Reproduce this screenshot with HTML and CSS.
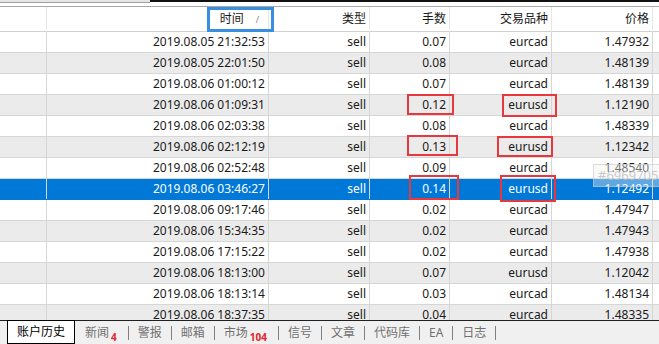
FILE: index.html
```html
<!DOCTYPE html>
<html lang="zh-CN">
<head>
    <meta charset="UTF-8">
    <title>账户历史</title>
    <link rel="stylesheet" href="styles.css">
</head>
<body>
    <div class="sheet">
        <div class="top-strip">
            <div class="strip-left"></div>
            <div class="strip-right"></div>
        </div>

        <div class="grid">
            <div class="row head">
                <div class="cell"></div>
                <div class="cell time-head">时间<span class="sort">/</span></div>
                <div class="cell">类型</div>
                <div class="cell">手数</div>
                <div class="cell">交易品种</div>
                <div class="cell">价格</div>
                <div class="cell last"></div>
            </div>

            <div class="row"><div class="cell"></div><div class="cell">2019.08.05 21:32:53</div><div class="cell">sell</div><div class="cell">0.07</div><div class="cell">eurcad</div><div class="cell">1.47932</div><div class="cell last"></div></div>
            <div class="row alt"><div class="cell"></div><div class="cell">2019.08.05 22:01:50</div><div class="cell">sell</div><div class="cell">0.08</div><div class="cell">eurcad</div><div class="cell">1.48139</div><div class="cell last"></div></div>
            <div class="row"><div class="cell"></div><div class="cell">2019.08.06 01:00:12</div><div class="cell">sell</div><div class="cell">0.07</div><div class="cell">eurcad</div><div class="cell">1.48139</div><div class="cell last"></div></div>
            <div class="row alt"><div class="cell"></div><div class="cell">2019.08.06 01:09:31</div><div class="cell">sell</div><div class="cell">0.12</div><div class="cell">eurusd</div><div class="cell">1.12190</div><div class="cell last"></div></div>
            <div class="row"><div class="cell"></div><div class="cell">2019.08.06 02:03:38</div><div class="cell">sell</div><div class="cell">0.08</div><div class="cell">eurcad</div><div class="cell">1.48339</div><div class="cell last"></div></div>
            <div class="row alt"><div class="cell"></div><div class="cell">2019.08.06 02:12:19</div><div class="cell">sell</div><div class="cell">0.13</div><div class="cell">eurusd</div><div class="cell">1.12342</div><div class="cell last"></div></div>
            <div class="row"><div class="cell"></div><div class="cell">2019.08.06 02:52:48</div><div class="cell">sell</div><div class="cell">0.09</div><div class="cell">eurcad</div><div class="cell">1.48540</div><div class="cell last"></div></div>
            <div class="row selected"><div class="cell"></div><div class="cell">2019.08.06 03:46:27</div><div class="cell">sell</div><div class="cell">0.14</div><div class="cell">eurusd</div><div class="cell">1.12492</div><div class="cell last"></div></div>
            <div class="row"><div class="cell"></div><div class="cell">2019.08.06 09:17:46</div><div class="cell">sell</div><div class="cell">0.02</div><div class="cell">eurcad</div><div class="cell">1.47947</div><div class="cell last"></div></div>
            <div class="row alt"><div class="cell"></div><div class="cell">2019.08.06 15:34:35</div><div class="cell">sell</div><div class="cell">0.02</div><div class="cell">eurcad</div><div class="cell">1.47943</div><div class="cell last"></div></div>
            <div class="row"><div class="cell"></div><div class="cell">2019.08.06 17:15:22</div><div class="cell">sell</div><div class="cell">0.02</div><div class="cell">eurcad</div><div class="cell">1.47938</div><div class="cell last"></div></div>
            <div class="row alt"><div class="cell"></div><div class="cell">2019.08.06 18:13:00</div><div class="cell">sell</div><div class="cell">0.07</div><div class="cell">eurusd</div><div class="cell">1.12042</div><div class="cell last"></div></div>
            <div class="row"><div class="cell"></div><div class="cell">2019.08.06 18:13:14</div><div class="cell">sell</div><div class="cell">0.03</div><div class="cell">eurcad</div><div class="cell">1.48134</div><div class="cell last"></div></div>
            <div class="row alt"><div class="cell"></div><div class="cell">2019.08.06 18:37:35</div><div class="cell">sell</div><div class="cell">0.04</div><div class="cell">eurcad</div><div class="cell">1.48335</div><div class="cell last"></div></div>
        </div>

        <div class="tabs">
            <span class="tab active">账户历史</span>
            <span class="tab first">新闻<b class="badge">4</b></span>
            <span class="sep"></span>
            <span class="tab">警报</span>
            <span class="sep"></span>
            <span class="tab">邮箱</span>
            <span class="sep"></span>
            <span class="tab">市场<b class="badge">104</b></span>
            <span class="sep"></span>
            <span class="tab">信号</span>
            <span class="sep"></span>
            <span class="tab">文章</span>
            <span class="sep"></span>
            <span class="tab">代码库</span>
            <span class="sep"></span>
            <span class="tab">EA</span>
            <span class="sep"></span>
            <span class="tab">日志</span>
            <span class="sep"></span>
        </div>

        <!-- annotation marks drawn over the table -->
        <div class="mark-blue"></div>
        <div class="mark m1"></div>
        <div class="mark m2"></div>
        <div class="mark m3"></div>
        <div class="mark m4"></div>
        <div class="mark m5"></div>
        <div class="mark m6"></div>
        <div class="picker-tip">#69697055</div>
    </div>
</body>
</html>
```

FILE: styles.css
```css
body {
    margin: 0;
    padding: 0;
    background-color: #ffffff;
    font-family: "Noto Sans", "Noto Sans CJK SC", sans-serif;
    font-size: 12px;
    color: #1a1a1a;
    overflow: hidden;
}

.sheet {
    position: relative;
    width: 659px;
    height: 344px;
    overflow: hidden;
}

.top-strip {
    display: flex;
    height: 7px;
    box-sizing: border-box;
    border-bottom: 1px solid #a8a8a8;
}

.strip-left {
    width: 150px;
    height: 2px;
    background-color: #e6e6e6;
    border-bottom: 1px solid #a0a0a0;
}

.strip-right {
    flex: 1;
    height: 2px;
    background-color: #111111;
}

.grid {
    height: 313px;
    overflow: hidden;
}

.row {
    display: grid;
    grid-template-columns: 47px 222px 101px 80px 102px 101px 1fr;
    height: 21px;
    box-sizing: border-box;
    border-bottom: 1px solid #d6d6d6;
}

.row.alt {
    background-color: #ebebeb;
}

.row.selected {
    background-color: #0078d7;
    color: #ffffff;
    border-bottom-color: #0078d7;
}

.cell {
    box-sizing: border-box;
    border-right: 1px solid #d6d6d6;
    padding-right: 3px;
    text-align: right;
    line-height: 20px;
    white-space: nowrap;
}

.cell.last {
    border-right: none;
}

.row.head {
    height: 25px;
    background-color: #ffffff;
    border-bottom-color: #d0d0d0;
}

.row.head .cell {
    border-right-color: #e6e6e6;
    line-height: 24px;
}

.row.head .time-head {
    padding-right: 9px;
}

.sort {
    color: #888888;
    font-size: 9px;
    margin-left: 12px;
}

.tabs {
    display: flex;
    align-items: center;
    height: 24px;
    box-sizing: border-box;
    border-top: 1px solid #202020;
    background-color: #f0f0f0;
    padding-left: 7px;
    color: #707070;
}

.tab {
    line-height: 22px;
    white-space: nowrap;
}

.tab.active {
    align-self: flex-start;
    margin-top: -1px;
    width: 68px;
    height: 24px;
    box-sizing: border-box;
    border: 1px solid #000000;
    background-color: #ffffff;
    color: #000000;
    text-align: center;
}

.tab.first {
    margin-left: 10px;
}

.badge {
    color: #e8202a;
    font-size: 10px;
    font-weight: bold;
    margin-left: 2px;
    margin-right: 2px;
    position: relative;
    top: 4px;
}

.sep {
    width: 1px;
    height: 14px;
    background-color: #808080;
    margin: 0 9px;
}

.mark-blue {
    position: absolute;
    left: 207px;
    top: 7px;
    width: 67px;
    height: 25px;
    box-sizing: border-box;
    border: 3px solid #3a8ee0;
}

.mark {
    position: absolute;
    box-sizing: border-box;
    border: 2px solid #e8383d;
}

.m1 { left: 407px; top: 94px;  width: 47px; height: 21px; }
.m2 { left: 502px; top: 94px;  width: 55px; height: 23px; }
.m3 { left: 407px; top: 135px; width: 51px; height: 21px; }
.m4 { left: 497px; top: 136px; width: 56px; height: 21px; }
.m5 { left: 409px; top: 175px; width: 50px; height: 25px; }
.m6 { left: 500px; top: 175px; width: 56px; height: 27px; }

.picker-tip {
    position: absolute;
    left: 593px;
    top: 164px;
    width: 80px;
    height: 23px;
    box-sizing: border-box;
    padding-left: 4px;
    line-height: 21px;
    background-color: rgba(240, 240, 240, 0.4);
    border: 1px solid rgba(200, 200, 200, 0.6);
    color: rgba(190, 190, 190, 0.8);
    font-size: 13px;
}
```
